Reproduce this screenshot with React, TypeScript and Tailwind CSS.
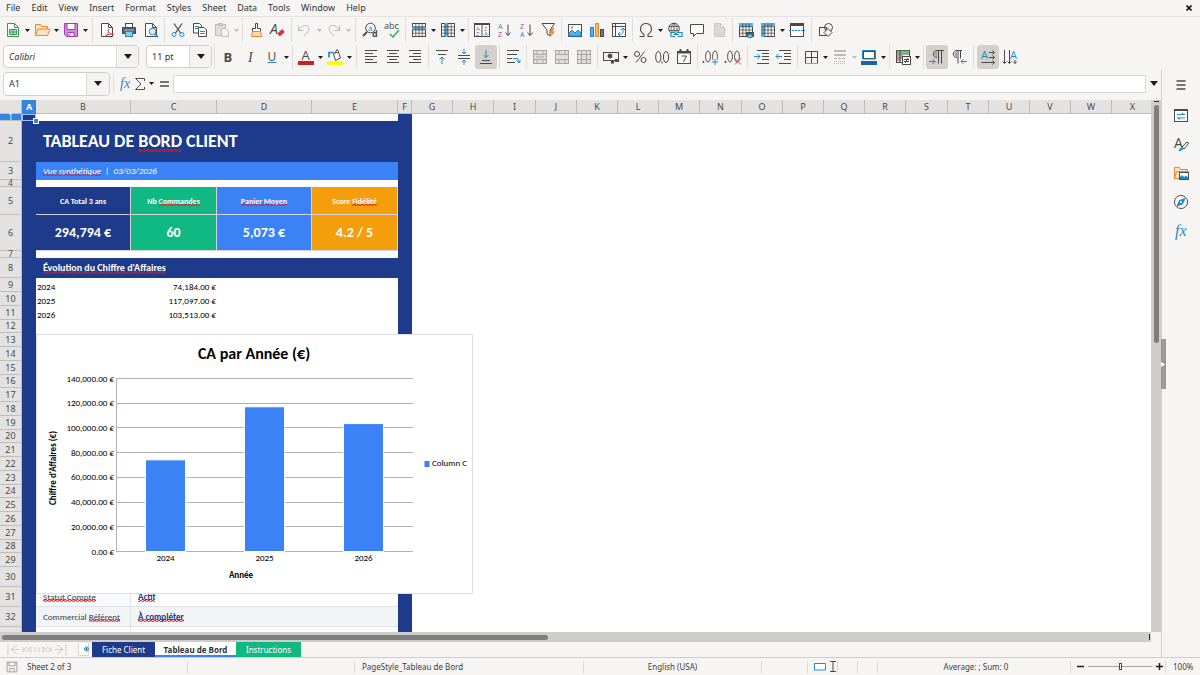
import { useState, type ReactNode } from 'react';
import clsx from 'clsx';

const DARK = '#4a4a48';
const BLUE = '#1e8bcd';
const ORANGE = '#ed8733';
const GREY = '#bdbbb8';

const Icon = ({ children, color = DARK }: { children: ReactNode, color?: string }) => (
    <svg width="16" height="16" viewBox="0 0 16 16" fill="none" stroke={color} strokeWidth="1" className="shrink-0 overflow-visible">
        {children}
    </svg>
);

const T = ({ x, y, s = 8, fill = DARK, children, bold, serif, italic }: { x: number, y: number, s?: number, fill?: string, children: ReactNode, bold?: boolean, serif?: boolean, italic?: boolean }) => (
    <text x={x} y={y} fontSize={s} fill={fill} stroke="none" fontWeight={bold ? 700 : 400} fontStyle={italic ? 'italic' : 'normal'} fontFamily={serif ? 'Liberation Serif, serif' : 'Open Sans, sans-serif'}>
        {children}
    </text>
);

const Triangle = ({ muted, large }: { muted?: boolean, large?: boolean }) => (
    <svg width={large ? 8 : 5} height={large ? 5 : 3} viewBox="0 0 8 5" preserveAspectRatio="none" fill={muted ? GREY : '#1c1c1b'}>
        <path d="M0 0h8L4 5z" />
    </svg>
);

const Tool = ({ label, children, active, drop, muted }: { label: string, children: ReactNode, active?: boolean, drop?: boolean, muted?: boolean }) => (
    <span className="flex items-center shrink-0">
        <button aria-label={label} className={clsx('w-[22px] h-6 flex items-center justify-center rounded-[3px]', active && 'bg-[#d3d0cc]')}>
            {children}
        </button>
        {drop && (
            <button aria-label={`${label} options`} className="w-[7px] h-6 flex items-center justify-center pt-px">
                <Triangle muted={muted} />
            </button>
        )}
    </span>
);

const Sep = ({ wide }: { wide?: boolean }) => (
    <span className={clsx('h-6 flex justify-center shrink-0', wide ? 'w-[7px]' : 'w-[5px]')}>
        <span className="w-px h-full bg-[#dfdedc]" />
    </span>
);

const Page = ({ color = DARK }: { color?: string }) => <path stroke={color} fill="#fff" d="M2.500 1.500h7l4 4v9h-11zM9.500 1.500v4h4" />;

const Table = ({ children, lit }: { children?: ReactNode, lit: string }) => (
    <Icon>
        <rect x="1.500" y="1.500" width="13" height="13" fill="#fff" />
        <path fill="#4fb0ee" stroke="none" d={lit} />
        <path strokeWidth=".8" d="M1.500 4.800h13M1.500 8h13M1.500 11.200h13M4.800 1.500v13M8 1.500v13M11.200 1.500v13" />
        {children}
    </Icon>
);

const Lines = ({ rows }: { rows: [number, number][] }) => (
    <>{rows.map(([a, b], i) => <path key={i} d={`M${a} ${1.5 + i * 3}H${b}`} />)}</>
);

const Merge = ({ d }: { d: string }) => (
    <Icon color="#a9a7a4">
        <rect x="1.500" y="1.500" width="13" height="13" fill="#e0dfdd" />
        <path d="M1.500 5.500h13M1.500 10.500h13" />
        <path d={d} />
    </Icon>
);

const StandardBar = () => (
    <div role="toolbar" aria-label="Standard" className="flex items-center h-[26px] pl-[2px] overflow-hidden shrink-0">
        <Tool label="New" drop><Icon color="#3b9a4c"><path fill="#fff" d="M2.500 1.500h7l4 4v9h-11zM9.500 1.500v4h4" /><path fill="#bfe5c4" d="M4.500 7.500h7v5h-7zM4.500 10h7M8 7.500v5" /></Icon></Tool>
        <Tool label="Open" drop><Icon color={ORANGE}><path fill="#fde3bd" d="M1.500 13.500v-11h5l1.500 2h5.500v2.500M1.500 13.500l2.500-6.500h12l-2.500 6.500z" /></Icon></Tool>
        <Tool label="Save" drop><Icon color="#a33fb0"><path fill="#d58ade" d="M1.500 1.500h13v13h-11l-2-2z" /><path fill="#fff" d="M4 1.500h8v6H4zM5 10.500h6v4H5z" /><path d="M7 12v2" /></Icon></Tool>
        <Sep wide />
        <Tool label="Export as PDF"><Icon><Page /><path stroke="#e2454c" d="M6 14.500c3-2 4-5 3.500-7-1 0-.5 4.500 5.500 5-3-1-7 0-9 2z" /></Icon></Tool>
        <Tool label="Print"><Icon><rect x="4.500" y="1.500" width="7" height="4" fill="#fff" /><path fill="#5b5b59" d="M1.500 5.500h13v6h-13z" /><path stroke="#8ec7ec" d="M3 8h10" /><rect x="4.500" y="9.500" width="7" height="5" fill="#8ec7ec" stroke={BLUE} /></Icon></Tool>
        <Tool label="Print Preview"><Icon><Page /><circle cx="9.500" cy="9.500" r="3.300" fill="#d9eefa" stroke={BLUE} /><path stroke={BLUE} strokeWidth="1.500" d="M12 12l3 3" /></Icon></Tool>
        <Sep />
        <Tool label="Cut"><Icon><path d="M4 1.500l6.500 9.500M12 1.500L5.500 11" strokeWidth="1.200" /><circle cx="4" cy="12.500" r="2" stroke={BLUE} /><circle cx="12" cy="12.500" r="2" stroke={BLUE} /></Icon></Tool>
        <Tool label="Copy"><Icon><path fill="#fff" d="M1.500 1.500h6l2 2v7.500h-8z" /><path stroke={BLUE} d="M3 4.500h4M3 6.500h3" /><path fill="#fff" d="M6.500 5.500h5.500l2.500 2.500v6.500h-8z" /><path stroke={BLUE} d="M8 9.500h5M8 11.500h5" /></Icon></Tool>
        <Tool label="Paste" drop muted><Icon color={GREY}><path fill="#e0dfdd" d="M1.500 2.500h10v11h-10z" /><path fill="#d0cecb" d="M4.500 1.500h4v2h-4z" /><path fill="#f6f5f4" d="M7.500 6.500h4l3 3v5h-7z" /></Icon></Tool>
        <Sep />
        <Tool label="Clone Formatting"><Icon><path fill="#fff" d="M7.500 1.500h2v5h3v3h-8v-3h3z" /><path fill="#fbd9a8" stroke={ORANGE} d="M4.500 9.500h8l1 5h-10z" /></Icon></Tool>
        <Tool label="Clear Direct Formatting"><Icon><T x={0} y={12} s={14} italic>A</T><path stroke="#d9363e" strokeWidth="4" d="M8.500 13l5-4.500" /></Icon></Tool>
        <Sep />
        <Tool label="Undo" drop muted><Icon color={GREY}><path d="M1.500 3.500v5h5M1.500 8.500C4 4 9 2 11 4.500s1 5-4 9.500" /></Icon></Tool>
        <Tool label="Redo" drop muted><Icon color={GREY}><path d="M13.500 3.500v5h-5M13.500 8.500C11 4 6 2 4 4.500s-1 5 4 9.500" /></Icon></Tool>
        <Sep wide />
        <Tool label="Find and Replace"><Icon><circle cx="8.500" cy="6" r="4.800" /><path strokeWidth="1.800" d="M5 10l-4 4" /><T x={6} y={8.500} s={8} fill={BLUE}>a</T><T x={10} y={15} s={9} bold>d</T></Icon></Tool>
        <Tool label="Spelling"><Icon><T x={0} y={7} s={9}>abc</T><path stroke="#2aa84a" strokeWidth="1.300" d="M6 12l3 3 6-7" /></Icon></Tool>
        <Sep />
        <Tool label="Row" drop><Table lit="M1 4.800h14V8H1z" /></Tool>
        <Tool label="Column" drop><Table lit="M4.800 1h3.200v14H4.800z" /></Tool>
        <Sep />
        <Tool label="Sort"><Icon><rect x=".5" y="1.500" width="15" height="13" fill="#fff" /><path strokeWidth="2" d="M0 2h16" /><path d="M8 2v13" /><T x={2} y={8.500} s={6} fill={BLUE}>A</T><T x={2} y={14} s={6} fill="#a33fb0">Z</T><T x={10} y={8.500} s={6} fill="#a33fb0">Z</T><T x={10} y={14} s={6} fill={BLUE}>A</T></Icon></Tool>
        <Tool label="Sort Ascending"><Icon><T x={2} y={6.500} s={7} fill={BLUE}>A</T><T x={2} y={15} s={7} fill="#a33fb0">Z</T><path d="M12 2.500v11M9.500 10.500l2.500 3 2.500-3" /></Icon></Tool>
        <Tool label="Sort Descending"><Icon><T x={2} y={6.500} s={7} fill="#a33fb0">Z</T><T x={2} y={15} s={7} fill={BLUE}>A</T><path d="M12 2.500v11M9.500 10.500l2.500 3 2.500-3" /></Icon></Tool>
        <Tool label="AutoFilter"><Icon><path fill="#fff" d="M2 1.500h12.500L10 8v6l-3-2V8z" /><path fill={ORANGE} stroke="none" d="M12 6l-3 5h2.500L10 15.500l5-6h-2.500l2-3.500z" /></Icon></Tool>
        <Sep />
        <Tool label="Insert Image"><Icon><rect x="1.500" y="2.500" width="13" height="12" fill="#fff" /><path fill="#4fb0ee" stroke={BLUE} d="M2 14v-3l3-3 3 3 3-3 3 3v3z" /><circle cx="5" cy="5.500" r="1.200" fill={ORANGE} stroke="none" /></Icon></Tool>
        <Tool label="Insert Chart"><Icon><rect x="1.500" y="5.500" width="3" height="9" fill="#4fb0ee" stroke={BLUE} /><rect x="6.500" y="1.500" width="3" height="13" fill="#fbb963" stroke={ORANGE} /><rect x="11.500" y="7.500" width="3" height="7" fill="#777" /></Icon></Tool>
        <Tool label="Insert Pivot Table"><Icon><rect x="1.500" y="1.500" width="13" height="13" fill="#fff" /><path d="M1.500 4.500h13M4.500 1.500v13" /><path stroke={BLUE} d="M12 6.500v3q0 3-5 3M10 8l2-2 2 2M9 10l-2 2 2 2" /></Icon></Tool>
        <Sep />
        <Tool label="Special Character" drop><Icon><path strokeWidth="1.100" d="M1.500 14.500h4.500v-2C.5 9 2 1.500 8 1.500s7.500 7.500 2 11v2h4.500" /></Icon></Tool>
        <Tool label="Insert Hyperlink"><Icon><circle cx="7" cy="6.500" r="5.300" /><path strokeWidth=".8" d="M2 4.500h10M2 8.500h10M7 1v11M7 1.500c-4 3-4 7 0 10M7 1.500c4 3 4 7 0 10" /><path stroke={BLUE} strokeWidth="1.200" fill="#f6f5f4" d="M8 10.500H4v4h4M11 10.500h4v4h-4M7 12.500h5" /></Icon></Tool>
        <Tool label="Insert Comment"><Icon><path fill="#fff" d="M1.500 2.500h13v9h-7l-3 3v-3h-3z" /></Icon></Tool>
        <Tool label="Headers and Footers"><Icon color="#c9c7c4"><path fill="#dddbd9" d="M3.500 1.500h6l4 4v9h-10zM9.500 1.500v4h4M5 4h3M5 12h7" /></Icon></Tool>
        <Sep />
        <Tool label="Define Print Area"><Table lit="M1 1h14v4H1z"><path fill="#555" d="M8.500 10.500h7v4h-7z" /><path fill="#8ec7ec" stroke={BLUE} d="M10 12.500h4v3h-4z" /></Table></Tool>
        <Tool label="Freeze Rows and Columns" drop><Table lit="M1 1h3.800v14H1zM1 1h14v3.500H1z" /></Tool>
        <Tool label="Split Window"><Icon><rect x="1.500" y="1.500" width="13" height="13" fill="#fff" /><path strokeWidth="3" d="M1 2.500h14" /><path stroke={BLUE} strokeDasharray="2 1" d="M0 8.500h16" /></Icon></Tool>
        <Sep wide />
        <Tool label="Show Draw Functions"><Icon><rect x="1.500" y="5.500" width="7" height="8" /><circle cx="10.500" cy="5.500" r="4" /><path fill="#f6f5f4" d="M10 6.500l4 4-4 4-4-4z" /></Icon></Tool>
    </div>
);

const Combo = ({ label, value, className }: { label: string, value: string, className: string }) => (
    <span className={clsx('relative shrink-0 h-[23px] flex items-center border border-[#d2cfcb] rounded-[4px] bg-white', className)}>
        <select aria-label={label} defaultValue={value} className="appearance-none w-full h-full pl-[5px] text-[9px] text-[#2e3436] bg-transparent outline-none">
            <option>{value}</option>
        </select>
        <span className="absolute right-0 inset-y-0 w-[22px] flex items-center justify-center bg-[#f4f3f2] border-l border-[#dcdad7] rounded-r-[4px] pointer-events-none">
            <Triangle large />
        </span>
    </span>
);

const FormattingBar = () => (
    <div role="toolbar" aria-label="Formatting" className="flex items-center h-[27px] pl-[3px] overflow-hidden shrink-0">
        <Combo label="Font Name" value="Calibri" className="w-[136px] italic" />
        <span className="w-[7px] shrink-0" />
        <Combo label="Font Size" value="11 pt" className="w-[66px]" />
        <Sep />
        <Tool label="Bold"><Icon><T x={3.500} y={12.500} s={13} bold>B</T></Icon></Tool>
        <Tool label="Italic"><Icon><T x={6} y={12.500} s={14} serif italic>I</T></Icon></Tool>
        <Tool label="Underline" drop><Icon><T x={3.500} y={11.500} s={12}>U</T><path stroke={BLUE} d="M3.500 13.500h9" /></Icon></Tool>
        <Sep />
        <Tool label="Font Color" drop><Icon><T x={3.500} y={10.500} s={13}>A</T><path stroke="#c9211e" strokeWidth="4" d="M0 14h16" /></Icon></Tool>
        <Tool label="Highlighting" drop><Icon><path fill="#fff" d="M6.500 4.500l5-1.500 2 6-5 2.500zM8 4l2-3.500L12 3" /><path stroke={BLUE} strokeWidth="1.700" d="M2 8.500V3.500h4.500" /><path stroke="#ff0" strokeWidth="4" d="M0 14h16" /></Icon></Tool>
        <Sep wide />
        <Tool label="Align Left"><Icon><Lines rows={[[2, 14], [2, 10], [2, 14], [2, 10], [2, 14]]} /></Icon></Tool>
        <Tool label="Center Horizontally"><Icon><Lines rows={[[2, 14], [4, 12], [2, 14], [4, 12], [2, 14]]} /></Icon></Tool>
        <Tool label="Align Right"><Icon><Lines rows={[[2, 14], [6, 14], [2, 14], [6, 14], [2, 14]]} /></Icon></Tool>
        <Sep />
        <Tool label="Align Top"><Icon><path d="M2 1.500h12M4 5.500h8" /><path stroke={BLUE} d="M8 15V8M5.500 10.500L8 8l2.500 2.500" /></Icon></Tool>
        <Tool label="Center Vertically"><Icon><path d="M2 6.500h12M2 9.500h12" /><path stroke={BLUE} d="M8 0v5M6 3l2 2 2-2M8 16v-5M6 13l2-2 2 2" /></Icon></Tool>
        <Tool label="Align Bottom" active><Icon><path d="M4 11.500h8M2 14.500h12" /><path stroke={BLUE} d="M8 1v7.500M5.500 6L8 8.500 10.500 6" /></Icon></Tool>
        <Sep />
        <Tool label="Wrap Text"><Icon><path d="M2 1.500h12M2 5.500h10M2 9.500h5M2 13.500h8" /><path stroke={BLUE} d="M8 9.500h4q2 0 2 4M11.500 11.500l2.500 2.500 1.500-3" /></Icon></Tool>
        <Sep />
        <Tool label="Merge and Center Cells"><Merge d="M5 1.500v4M11 1.500v4M5 10.500v4M11 10.500v4M4 8h8" /></Tool>
        <Tool label="Merge Cells"><Merge d="M5 1.500v4M11 1.500v4M5 10.500v4M11 10.500v4" /></Tool>
        <Tool label="Split Cells"><Merge d="M5.500 1.500v13M10.500 1.500v13" /></Tool>
        <Sep />
        <Tool label="Format as Currency" drop><Icon><rect x=".5" y="3.500" width="15" height="8" /><circle cx="7" cy="7" r="2" fill={DARK} /><path strokeWidth="3" d="M8 13h3M12 11.500h4" /></Icon></Tool>
        <Tool label="Format as Percent"><Icon><circle cx="5" cy="5" r="2.500" /><circle cx="11.500" cy="11" r="2.500" /><path d="M12.500 2.500l-8.500 11" /></Icon></Tool>
        <Tool label="Format as Number"><Icon><ellipse cx="4.300" cy="8" rx="2.600" ry="5.500" /><ellipse cx="12" cy="8" rx="2.600" ry="5.500" /><path d="M8 12.500v2" /></Icon></Tool>
        <Tool label="Format as Date"><Icon><rect x="1.500" y="2.500" width="13" height="12" fill="#fff" /><path strokeWidth="2" d="M1 3.500h14M4.500 0v4M11.500 0v4" /><path d="M5.500 7h5l-3 6" /></Icon></Tool>
        <Sep />
        <Tool label="Add Decimal Place"><Icon><ellipse cx="5" cy="7.500" rx="2.400" ry="5.500" /><ellipse cx="12" cy="7.500" rx="2.400" ry="5.500" /><path strokeWidth="1.500" d="M.5 12v2" /><path stroke="#f6f5f4" strokeWidth="3" d="M12 8v8M8 12.500h8" /><path stroke={BLUE} d="M12 10v6M9 13h6" /></Icon></Tool>
        <Tool label="Delete Decimal Place"><Icon><ellipse cx="5" cy="7.500" rx="2.400" ry="5.500" /><ellipse cx="12" cy="7.500" rx="2.400" ry="5.500" /><path strokeWidth="1.500" d="M.5 12v2" /><path stroke="#e2454c" d="M10 9.500l6 6M16 9.500l-6 6" /></Icon></Tool>
        <Sep wide />
        <Tool label="Increase Indent"><Icon><path d="M3 1.500h12M8 4.500h7M8 7.500h7M8 10.500h7M3 14.500h12" /><path stroke={BLUE} d="M0 7.500h6M3.500 5L6 7.500 3.500 10" /></Icon></Tool>
        <Tool label="Decrease Indent"><Icon><path d="M3 1.500h12M8 4.500h7M8 7.500h7M8 10.500h7M3 14.500h12" /><path stroke={BLUE} d="M0 7.500h6M2.500 5L0 7.500 2.500 10" /></Icon></Tool>
        <Sep />
        <Tool label="Borders" drop><Icon><path d="M2.500 14V2.500h12V14M8.500 2.500V14M2.500 8.500h12" /><path stroke={ORANGE} d="M2 14.500h13" /></Icon></Tool>
        <Tool label="Border Style" drop muted><Icon color={GREY}><path strokeWidth="2" d="M2 2h12M2 6h12" /><path strokeDasharray="3 1" d="M2 9.500h12" /><path strokeDasharray="1 1" d="M2 12.500h12M2 14.500h12" /></Icon></Tool>
        <Tool label="Border Color" drop><Icon><rect x="2.500" y="2.500" width="11" height="7" fill="#fff" /><path stroke={BLUE} d="M1.500 1.500h13V10h-13z" /><path stroke="#1b63a5" strokeWidth="4" d="M0 14h16" /></Icon></Tool>
        <Sep />
        <Tool label="Conditional" drop><Icon><rect x="1.500" y="1.500" width="13" height="12" fill="#fff" /><path stroke="#6cc07a" strokeWidth="2.500" d="M2 3h12" /><path stroke="#ef8f80" strokeWidth="2.500" d="M2 7h6M2 11h4" /><path d="M1.500 5h13M1.500 9h6M5 1.500v12" /><rect x="7.500" y="7.500" width="8" height="8" fill="#fff" /><path d="M9 10.500h5M9 12.500h5M13 9l-3 5" /></Icon></Tool>
        <Sep />
        <Tool label="Left-To-Right" active><Icon><path d="M8 8.500C3 8.500 3 1.500 8 1.500h7M9.500 1.500v13M12.500 1.500v13" /><path fill="#a9a7a4" stroke="none" d="M8.500 2v6C4 8 4 2 8.500 2z" /><path stroke={BLUE} d="M0 12.500h6M3.500 10L6 12.500 3.500 15" /></Icon></Tool>
        <Tool label="Right-To-Left"><Icon><path d="M6 8.500C1 8.500 1 1.500 6 1.500h5M7 1.500v13M9.500 1.500v8" /><path fill="#a9a7a4" stroke="none" d="M7 2v6C2 8 2 2 7 2z" /><path stroke={BLUE} d="M16 12.500h-6M12.500 10L10 12.500l2.500 2.500" /></Icon></Tool>
        <Sep wide />
        <Tool label="Text direction from left to right" active><Icon><T x={1} y={10} s={11} fill={BLUE}>A</T><path d="M9 3.500h5.500M12.500 1.500l2 2-2 2M9 8.500h5.500M12.500 6.500l2 2-2 2M1.500 13.500h13M12.500 11.500l2 2-2 2" /></Icon></Tool>
        <Tool label="Text direction from top to bottom"><Icon><T x={8} y={10} s={11} fill={BLUE}>A</T><path d="M2.500 1v13.500M.5 12.500l2 2 2-2M7.500 1v13.500M5.500 12.500l2 2 2-2M13 11v3.500M11 12.500l2 2 2-2" /></Icon></Tool>
    </div>
);

const FormulaBar = () => (
    <div className="flex items-center h-[30px] pb-[3px] pl-[3px] shrink-0">
        <span className="w-[107px] h-6 flex shrink-0 border border-[#d2cfcb] rounded-[4px] bg-white overflow-hidden">
            <input aria-label="Name Box" defaultValue="A1" className="flex-1 min-w-0 pl-[5px] text-[9px] text-[#2e3436] outline-none" />
            <button aria-label="Named ranges" className="w-[23px] flex items-center justify-center bg-[#f4f3f2] border-l border-[#dcdad7]"><Triangle large /></button>
        </span>
        <span className="w-[7px] flex justify-center h-5"><span className="w-px bg-[#dfdedc]" /></span>
        <button aria-label="Function Wizard" className="w-4 flex justify-center"><Icon><T x={3} y={12} s={14} fill={BLUE} serif italic>fx</T></Icon></button>
        <button aria-label="Select Function" className="w-[22px] flex items-center justify-center gap-1"><svg width="10" height="12" viewBox="0 0 10 12" fill="none" stroke="#4d4d4b"><path d="M9.500 3V.5H.5L6 6 .5 11.500h9V9" /></svg><Triangle /></button>
        <button aria-label="Formula" className="w-[18px] flex justify-center"><svg width="9" height="6" viewBox="0 0 9 6" stroke={DARK} strokeWidth="1.500"><path d="M0 1h9M0 5h9" /></svg></button>
        <input aria-label="Formula input" className="flex-1 min-w-0 h-[18px] px-1 text-[9px] bg-white border border-[#d9d7d4] outline-none" />
        <button aria-label="Expand Formula Bar" className="w-[15px] flex justify-center"><Triangle large /></button>
    </div>
);

/* ---------- sheet ---------- */

const COLS = 'GHIJKLMNOPQRSTUVWX'.split('');
const HEAD = 'border-r border-b border-[#bfbdba] font-normal p-0';
const IDLE = 'bg-[#e3e2e0] text-[#4a4a48]';

// red squiggle of the spell checker
const Err = ({ children }: { children: ReactNode }) => (
    <span className="bg-repeat-x bg-bottom bg-[length:4px_3px] bg-[linear-gradient(45deg,transparent_60%,#e11d1d_65%,#e11d1d_80%,transparent_85%),linear-gradient(135deg,transparent_15%,#e11d1d_20%,#e11d1d_35%,transparent_40%),linear-gradient(135deg,transparent_60%,#e11d1d_65%,#e11d1d_80%,transparent_85%),linear-gradient(45deg,transparent_15%,#e11d1d_20%,#e11d1d_35%,transparent_40%)]">
        {children}
    </span>
);

const Row = ({ n, h, children, selected }: { n: number, h: string, children?: ReactNode, selected?: boolean }) => (
    <tr className={h}>
        <th scope="row" className={clsx(HEAD, selected ? 'bg-[#3584e4] text-white' : IDLE, h === 'h-[7px]' ? 'text-[8px] leading-[6px]' : 'text-[9px] leading-3')}>{n}</th>
        <td className="p-0 bg-[#1e3a8a]" />
        {children ?? <td colSpan={4} className="p-0" />}
        <td className="p-0 bg-[#1e3a8a]" />
        <td colSpan={COLS.length} className="p-0" />
    </tr>
);

const kpis = [
    { label: 'CA Total 3 ans', node: <>CA Total 3 ans</>, value: '294,794 €', bg: 'bg-[#1e3a8a]' },
    { label: 'Nb Commandes', node: <>Nb <Err>Commandes</Err></>, value: '60', bg: 'bg-[#10b981]' },
    { label: 'Panier Moyen', node: <Err>Panier Moyen</Err>, value: '5,073 €', bg: 'bg-[#3b82f6]' },
    { label: 'Score Fidélité', node: <>Score <Err>Fidélité</Err></>, value: '4.2 / 5', bg: 'bg-[#f59e0b]' },
];

const years = [
    { year: '2024', amount: 74184, text: '74,184.00 €' },
    { year: '2025', amount: 117097, text: '117,097.00 €' },
    { year: '2026', amount: 103513, text: '103,513.00 €' },
];

const infos = [
    { name: <Err>Statut Compte</Err>, value: 'Actif', bg: 'bg-white' },
    { name: <>Commercial <Err>Référent</Err></>, value: 'À compléter', bg: 'bg-[#f3f4f6]' },
];

const Chart = () => {
    const ticks = [0, 20000, 40000, 60000, 80000, 100000, 120000, 140000];
    const y = (v: number) => 217.5 - (173 * v) / 140000;
    return (
        <svg viewBox="0 0 437 260" className="w-full h-full font-[Carlito,Lato,sans-serif]" role="img" aria-label="CA par Année (€)">
            <text x="218" y="25" textAnchor="middle" fontSize="16" fontWeight="700">CA par Année (€)</text>
            {ticks.map((t) => (
                <g key={t}>
                    <path d={`M80 ${Math.floor(y(t)) + 0.5}H377`} stroke="#b3b3b3" />
                    <text x="78" y={y(t) + 3} textAnchor="end" fontSize="9">{t.toLocaleString('en-US')}.00 €</text>
                </g>
            ))}
            <path d="M80.500 44v174" stroke="#b3b3b3" />
            {years.map((d, i) => (
                <g key={d.year}>
                    <rect x={109.5 + i * 99} y={y(d.amount)} width="40" height={217.5 - y(d.amount)} fill="#3b82f6" stroke="#fff" />
                    <text x={129.5 + i * 99} y="227" textAnchor="middle" fontSize="9">{d.year}</text>
                </g>
            ))}
            <text x="205" y="244" textAnchor="middle" fontSize="9" fontWeight="700">Année</text>
            <text transform="translate(20 134) rotate(-90)" textAnchor="middle" fontSize="9" fontWeight="700">Chiffre d'Affaires (€)</text>
            <rect x="388.500" y="127" width="5" height="6" fill="#3b82f6" />
            <text x="396" y="132" fontSize="9">Column C</text>
        </svg>
    );
};

const Grid = () => (
    <div className="relative flex-1 min-w-0 overflow-hidden bg-white">
        <table className="table-fixed w-px border-separate border-spacing-0 text-[9px] text-black font-[Carlito,Lato,sans-serif]">
            <colgroup>
                <col className="w-[22px]" />
                <col className="w-[14px]" />
                <col className="w-[95px]" />
                <col className="w-[86px]" />
                <col className="w-[95px]" />
                <col className="w-[86px]" />
                <col className="w-[14px]" />
                {COLS.map((c, i) => <col key={c} className={i % 5 === 2 ? 'w-[42px]' : 'w-[41px]'} />)}
            </colgroup>
            <thead className="font-['Noto_Sans',sans-serif] text-[9px] leading-3">
                <tr className="h-[14px]">
                    <td className={clsx(HEAD, IDLE)} />
                    <th scope="col" className="bg-[#3584e4] text-white p-0">A</th>
                    {['B', 'C', 'D', 'E', 'F', ...COLS].map((c) => <th key={c} scope="col" className={clsx(HEAD, IDLE)}>{c}</th>)}
                </tr>
            </thead>
            <tbody className="[&_th]:font-['Noto_Sans',sans-serif]">
                <Row n={1} h="h-[7px]" selected />
                <Row n={2} h="h-[41px]">
                    <td colSpan={4} className="p-0 pl-[7px] pb-[2px] bg-[#1e3a8a] text-white text-[18px] leading-5 font-bold">TABLEAU DE <Err>BORD</Err> CLIENT</td>
                </Row>
                <Row n={3} h="h-[18px]">
                    <td colSpan={4} className="p-0 pl-[7px] bg-[#3b82f6] text-white leading-3 italic"><Err>Vue synthétique</Err>&nbsp; |&nbsp; 03/03/2026</td>
                </Row>
                <Row n={4} h="h-[7px]" />
                <Row n={5} h="h-[28px]">
                    {kpis.map((k) => <td key={k.label} className={clsx('p-0 border-r border-b border-[#d1d5db] text-center text-white text-[8px] leading-3 font-bold', k.bg)}>{k.node}</td>)}
                </Row>
                <Row n={6} h="h-[36px]">
                    {kpis.map((k) => <td key={k.label} className={clsx('p-0 border-r border-b border-[#d1d5db] text-center text-white text-[14px] leading-4 font-bold', k.bg)}>{k.value}</td>)}
                </Row>
                <Row n={7} h="h-[7px]" />
                <Row n={8} h="h-[20px]">
                    <td colSpan={4} className="p-0 pl-[7px] bg-[#1e3a8a] text-white text-[10px] leading-3 font-bold"><Err>Évolution du Chiffre d'Affaires</Err></td>
                </Row>
                {Array.from({ length: 21 }, (_, i) => (
                    <Row key={i} n={i + 9} h={i % 4 === 3 ? 'h-[13px]' : 'h-[14px]'}>
                        {years[i] && (
                            <>
                                <td className="p-0 pl-px align-bottom leading-[11px]">{years[i].year}</td>
                                <td className="p-0 pr-px align-bottom leading-[11px] text-right">{years[i].text}</td>
                                <td colSpan={2} className="p-0" />
                            </>
                        )}
                    </Row>
                ))}
                <Row n={30} h="h-[20px]" />
                {infos.map((r, i) => (
                    <Row key={r.value} n={31 + i} h="h-[20px]">
                        <td className={clsx('p-0 pl-[7px] border-r border-b border-[#dfe2e7] leading-3 text-gray-700', i === 0 ? 'bg-gray-50' : r.bg)}>{r.name}</td>
                        <td colSpan={3} className={clsx('p-0 pl-[7px] border-b border-[#dfe2e7] leading-3 font-bold text-[#1e3a8a]', r.bg)}><Err>{r.value}</Err></td>
                    </Row>
                ))}
                <Row n={33} h="h-[20px]">
                    <td className="p-0 border-r border-[#dfe2e7]" />
                    <td colSpan={3} className="p-0" />
                </Row>
            </tbody>
        </table>
        {/* cell cursor on A1 */}
        <span className="absolute left-[22px] top-[14px] w-[14px] h-[7px] border border-[#9cc4f2]" />
        <span className="absolute left-[34px] top-[19px] size-1 bg-[#3584e4] outline outline-white" />
        <div className="absolute left-[36px] top-[234px] w-[437px] h-[260px] bg-white shadow-[inset_0_0_0_1px_#dedede]">
            <Chart />
        </div>
    </div>
);

const Sidebar = () => (
    <aside className="relative w-[39px] shrink-0 border-l border-[#d2d0cd] flex flex-col items-center pt-[8px] gap-[13px]">
        <button aria-label="Sidebar Settings"><Icon><path strokeWidth="1.500" d="M3.500 3h9M3.500 7h9M3.500 11h9" /></Icon></button>
        <button aria-label="Properties"><Icon><rect x="1.500" y="2.500" width="13" height="12" fill="#fff" /><path strokeWidth="2" d="M1 3h14" /><path stroke={BLUE} d="M4 7.500h8M4 11h8M9 6l2 1.500M7 12.500L5 11" /></Icon></button>
        <button aria-label="Styles"><Icon><T x={1} y={12} s={14}>A</T><path fill="#fff" d="M9 11l5-5q2 0 1 2l-4 5z" /><path fill="#4fb0ee" stroke={BLUE} d="M6 15q1-4 4-3.500 1 2-4 3.500z" /></Icon></button>
        <button aria-label="Gallery"><Icon color={ORANGE}><path fill="#fde3bd" d="M1.500 13.500v-11h5l1 2h7v9zM1.500 13.500l2-7h12" /><rect x="6.500" y="7.500" width="9" height="7" fill="#fff" stroke={DARK} /><path fill={BLUE} stroke="none" d="M7 14v-2l2-2 2 2 2-1.500 2 2V14z" /></Icon></button>
        <button aria-label="Navigator"><Icon><circle cx="8" cy="8" r="6.500" fill="#fff" /><path fill={BLUE} stroke={BLUE} d="M12 4.500L9.500 10 4 12l2.500-5.500z" /><circle cx="8" cy="8" r="1" fill="#fff" stroke="none" /></Icon></button>
        <button aria-label="Functions"><Icon><T x={2} y={13} s={16} fill={BLUE} serif italic>fx</T></Icon></button>
        <button aria-label="Hide sidebar" className="absolute -left-px top-[269px] w-[5px] h-[50px] bg-[#9a9a99] flex items-center">
            <svg width="4" height="5" viewBox="0 0 4 5" fill="#fff"><path d="M0 0l4 2.500L0 5z" /></svg>
        </button>
    </aside>
);

const SheetTabs = ({ active, onPick }: { active: number, onPick: (i: number) => void }) => (
    <div className="flex h-[15px] shrink-0 text-[8px] leading-3">
        <span className="w-[74px] flex items-center justify-center">
            <svg width="60" height="11" viewBox="0 0 60 11" fill="none" stroke="#cfcdca">
                <path d="M1 0v11M10 1L4 5.500l6 4.500M4 5.500h8M16 3v5M20 3l-4 2.500L20 8M24 3l-4 2.500L24 8zM28 3v5M32 3v5M36 3l4 2.500L36 8zM40 3l4 2.500L40 8M44 3v5M50 1l6 4.500-6 4.500M48 5.500h8M59 0v11" />
            </svg>
        </span>
        <button aria-label="Add Sheet" className="w-[18px] flex items-center justify-center">
            <svg width="13" height="13" viewBox="0 0 13 13" fill="#fff" stroke="#d6d4d1"><path d="M1.500 0v12.500h10V0" /><circle cx="9.500" cy="6" r="2" stroke={BLUE} /><path d="M9.500 5v2M8.500 6h2" stroke="#1b63a5" /></svg>
        </button>
        {[
            { name: 'Fiche Client', cls: 'w-[63px] bg-[#1e3a8a] text-white' },
            { name: 'Tableau de Bord', cls: 'w-[81px] bg-[#3b82f6] text-white' },
            { name: 'Instructions', cls: 'w-[65px] bg-[#10b981] text-white' },
        ].map((t, i) => (
            <button key={t.name} onClick={() => onPick(i)} className={clsx('shrink-0 whitespace-nowrap', t.cls, active === i && '!bg-white !text-[#2e3436] font-bold shadow-[inset_0_-2px_0_#3b82f6]')}>
                {t.name}
            </button>
        ))}
    </div>
);

const Cell = ({ children, className }: { children?: ReactNode, className: string }) => (
    <span className={clsx('flex items-center h-3 border-r border-[#dddbd8]', className)}>{children}</span>
);

const StatusBar = ({ sheet }: { sheet: number }) => (
    <footer className="flex items-center h-[18px] shrink-0 border-t border-[#cfcdca] text-[8px] leading-3 text-[#3d3d3b] whitespace-nowrap">
        <Cell className="w-[188px] shrink-0 gap-[9px] pl-[6px]">
            <svg width="12" height="12" viewBox="0 0 16 16" fill="none" stroke="#8b8987"><path d="M1.500 1.500h13v13h-13zM4 1.500v5h8v-5M5 14v-4h6v4" /></svg>
            Sheet {sheet + 1} of 3
        </Cell>
        <Cell className="w-[167px] shrink" />
        <Cell className="flex-1 pl-[7px]">PageStyle_Tableau de Bord</Cell>
        <Cell className="w-[178px] justify-center">English (USA)</Cell>
        <Cell className="w-[46px]" />
        <Cell className="w-[30px] justify-center gap-1 pl-1">
            <svg width="12" height="8" viewBox="0 0 12 8" fill="#fff" stroke={BLUE}><path d="M.5.500h11v6.500H.5z" /></svg>
            <svg width="6" height="11" viewBox="0 0 6 11" fill="none" stroke={DARK}><path d="M0 .5h6M3 .5v10M0 10.500h6" /></svg>
        </Cell>
        <Cell className="w-5" />
        <Cell className="w-5" />
        <Cell className="w-[193px] justify-center pl-1">Average: ; Sum: 0</Cell>
        <Cell className="w-[95px] justify-center gap-1 pl-1">
            <button aria-label="Zoom Out"><svg width="7" height="7" viewBox="0 0 7 7" stroke="#1c1c1b" strokeWidth="1.500"><path d="M0 3.500h7" /></svg></button>
            <input
                type="range"
                aria-label="Zoom"
                className="appearance-none w-[64px] h-2 bg-[linear-gradient(#a5a3a0,#a5a3a0)] bg-[length:100%_1px] bg-no-repeat bg-center [&::-webkit-slider-thumb]:appearance-none [&::-webkit-slider-thumb]:w-[3px] [&::-webkit-slider-thumb]:h-[7px] [&::-webkit-slider-thumb]:bg-white [&::-webkit-slider-thumb]:border [&::-webkit-slider-thumb]:border-[#4a4a48]"
            />
            <button aria-label="Zoom In"><svg width="7" height="7" viewBox="0 0 7 7" stroke="#1c1c1b" strokeWidth="1.500"><path d="M0 3.500h7M3.500 0v7" /></svg></button>
        </Cell>
        <span className="w-[34px] pl-[7px]">100%</span>
    </footer>
);

export default function App() {
    const [sheet, setSheet] = useState(1);

    return (
        <div className="flex flex-col h-screen overflow-hidden bg-[#f6f5f4] text-[#2e3436] font-['Noto_Sans','Open_Sans',sans-serif]">
            <nav className="flex items-center h-[17px] shrink-0 px-[6px] gap-[11px] text-[9px] leading-3 border-b border-[#e4e3e1]">
                {['File', 'Edit', 'View', 'Insert', 'Format', 'Styles', 'Sheet', 'Data', 'Tools', 'Window', 'Help'].map((m) => (
                    <button key={m}>{m}</button>
                ))}
                <button aria-label="Close Document" className="ml-auto mr-[2px]">
                    <svg width="6" height="6" viewBox="0 0 6 6" stroke="#1c1c1b" strokeWidth="1.700"><path d="M.5.500l5 5M5.500.500l-5 5" /></svg>
                </button>
            </nav>
            <StandardBar />
            <FormattingBar />
            <main className="flex flex-1 min-h-0">
                <div className="flex flex-col flex-1 min-w-0">
                    <FormulaBar />
                    <div className="flex flex-1 min-h-0">
                        <Grid />
                        <div className="w-[10px] shrink-0 bg-[#cecdcc] flex flex-col items-center">
                            <span className="w-[5px] h-px mt-px bg-[#2e3436]" />
                            <span className="w-[5px] h-[238px] mt-[3px] rounded-full bg-[#7f7f7e]" />
                        </div>
                    </div>
                    <div className="h-[10px] shrink-0 bg-[#cecdcc] flex items-center pl-[2px] mr-[10px]">
                        <span className="w-[47.5%] h-[5px] rounded-full bg-[#7f7f7e]" />
                        <span className="w-px h-[6px] ml-auto mr-px bg-[#2e3436]" />
                    </div>
                    <SheetTabs active={sheet} onPick={setSheet} />
                </div>
                <Sidebar />
            </main>
            <StatusBar sheet={sheet} />
        </div>
    );
}
